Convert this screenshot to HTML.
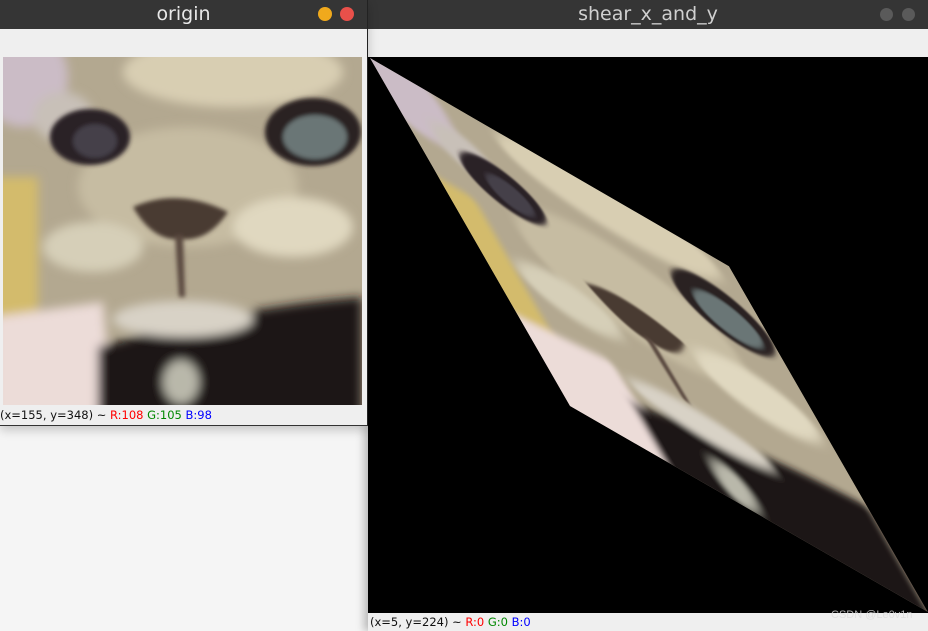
<!DOCTYPE html>
<html><head><meta charset="utf-8"><style>
html,body{margin:0;padding:0;width:928px;height:631px;overflow:hidden;background:#f5f5f5;font-family:"Liberation Sans","DejaVu Sans",sans-serif;position:relative}
.abs{position:absolute}
.title{color:#e8e8e8;font-family:"DejaVu Sans","Liberation Sans",sans-serif;font-size:19px;text-align:center;line-height:29px}
.status{font-family:"DejaVu Sans",sans-serif;font-size:11.5px;color:#111;line-height:18px;white-space:nowrap}
.r{color:#f00}.g{color:#080}.b{color:#00f}
</style></head><body>
<svg width="0" height="0" style="position:absolute;left:0;top:0">
<defs>
<filter id="bl" x="-10%" y="-10%" width="120%" height="120%"><feGaussianBlur stdDeviation="5"/></filter>
<filter id="bl2"><feGaussianBlur stdDeviation="2"/></filter>
<g id="cat">
<rect x="0" y="0" width="359" height="348" fill="#b3a890"/>
<g filter="url(#bl)">
<ellipse cx="20" cy="20" rx="45" ry="50" fill="#cbbcc6"/>
<ellipse cx="230" cy="15" rx="110" ry="35" fill="#d8ceb2"/>
<ellipse cx="60" cy="60" rx="30" ry="25" fill="#c8c0b8"/>
<rect x="-10" y="120" width="45" height="160" fill="#d3bb6c"/>
<ellipse cx="185" cy="130" rx="110" ry="60" fill="#c6bca2"/>
<ellipse cx="290" cy="170" rx="60" ry="30" fill="#e0d8c0"/>
<ellipse cx="90" cy="190" rx="50" ry="25" fill="#d6cfb8"/>
<path d="M-10 260 L100 245 L110 360 L-10 360Z" fill="#ecdcd8"/>
<path d="M95 290 Q230 250 359 240 L359 360 L95 360Z" fill="#1c1814"/>
<ellipse cx="180" cy="262" rx="70" ry="18" fill="#d8d2c6"/>
<ellipse cx="178" cy="325" rx="18" ry="22" fill="#b9b8aa"/>
</g>
<g filter="url(#bl2)">
<ellipse cx="87" cy="80" rx="40" ry="28" fill="#2a2026"/>
<ellipse cx="92" cy="84" rx="22" ry="17" fill="#454048"/>
<ellipse cx="310" cy="75" rx="48" ry="34" fill="#2a2024"/>
<ellipse cx="312" cy="80" rx="32" ry="22" fill="#6a7676"/>
<path d="M130 150 Q175 130 225 155 Q205 185 178 182 Q150 185 130 150Z" fill="#4a3a32"/>
<path d="M172 178 L180 178 L182 240 L176 240Z" fill="#5a4a40"/>
</g>
</g>
</defs>
</svg>

<!-- right window -->
<div class="abs" style="left:368px;top:0;width:560px;height:631px;background:#efefef;box-shadow:-4px 0 8px rgba(0,0,0,.25)">
  <div class="abs title" style="left:0;top:0;width:560px;height:29px;background:#353535;color:#d0d0d0">shear_x_and_y</div>
  <div class="abs" style="left:512px;top:8px;width:13px;height:13px;border-radius:50%;background:#5a5a5a"></div>
  <div class="abs" style="left:534px;top:8px;width:13px;height:13px;border-radius:50%;background:#5a5a5a"></div>
  <div class="abs" style="left:0;top:57px;width:560px;height:556px;background:#000"></div>
  <div class="abs status" style="left:2px;top:613px">(x=5, y=224) ~ <span class="r">R:0</span> <span class="g">G:0</span> <span class="b">B:0</span></div>
  <div class="abs" style="left:463px;top:609px;font-size:11px;color:#ddd;opacity:.8">CSDN @Le0v1n</div>
</div>
<svg class="abs" style="left:0;top:0" width="928" height="631">
  <clipPath id="pc"><path d="M370 58 L729 266 L928 612 L570 406Z"/></clipPath>
  <g clip-path="url(#pc)"><g transform="matrix(1,0.58,0.575,1,370,58)"><use href="#cat"/></g></g>
</svg>

<!-- left window -->
<div class="abs" style="left:0;top:0;width:367px;height:425px;background:#efefef;border-right:1px solid #222;border-bottom:1px solid #333;box-shadow:0 4px 10px rgba(0,0,0,.2)">
  <div class="abs title" style="left:0;top:0;width:367px;height:29px;background:#353535">origin</div>
  <div class="abs" style="left:318px;top:7px;width:14px;height:14px;border-radius:50%;background:#f0a91c"></div>
  <div class="abs" style="left:340px;top:7px;width:14px;height:14px;border-radius:50%;background:#e9504a"></div>
  <svg class="abs" style="left:3px;top:57px" width="359" height="348"><use href="#cat"/></svg>
  <div class="abs status" style="left:0;top:406px">(x=155, y=348) ~ <span class="r">R:108</span> <span class="g">G:105</span> <span class="b">B:98</span></div>
</div>
</body></html>
